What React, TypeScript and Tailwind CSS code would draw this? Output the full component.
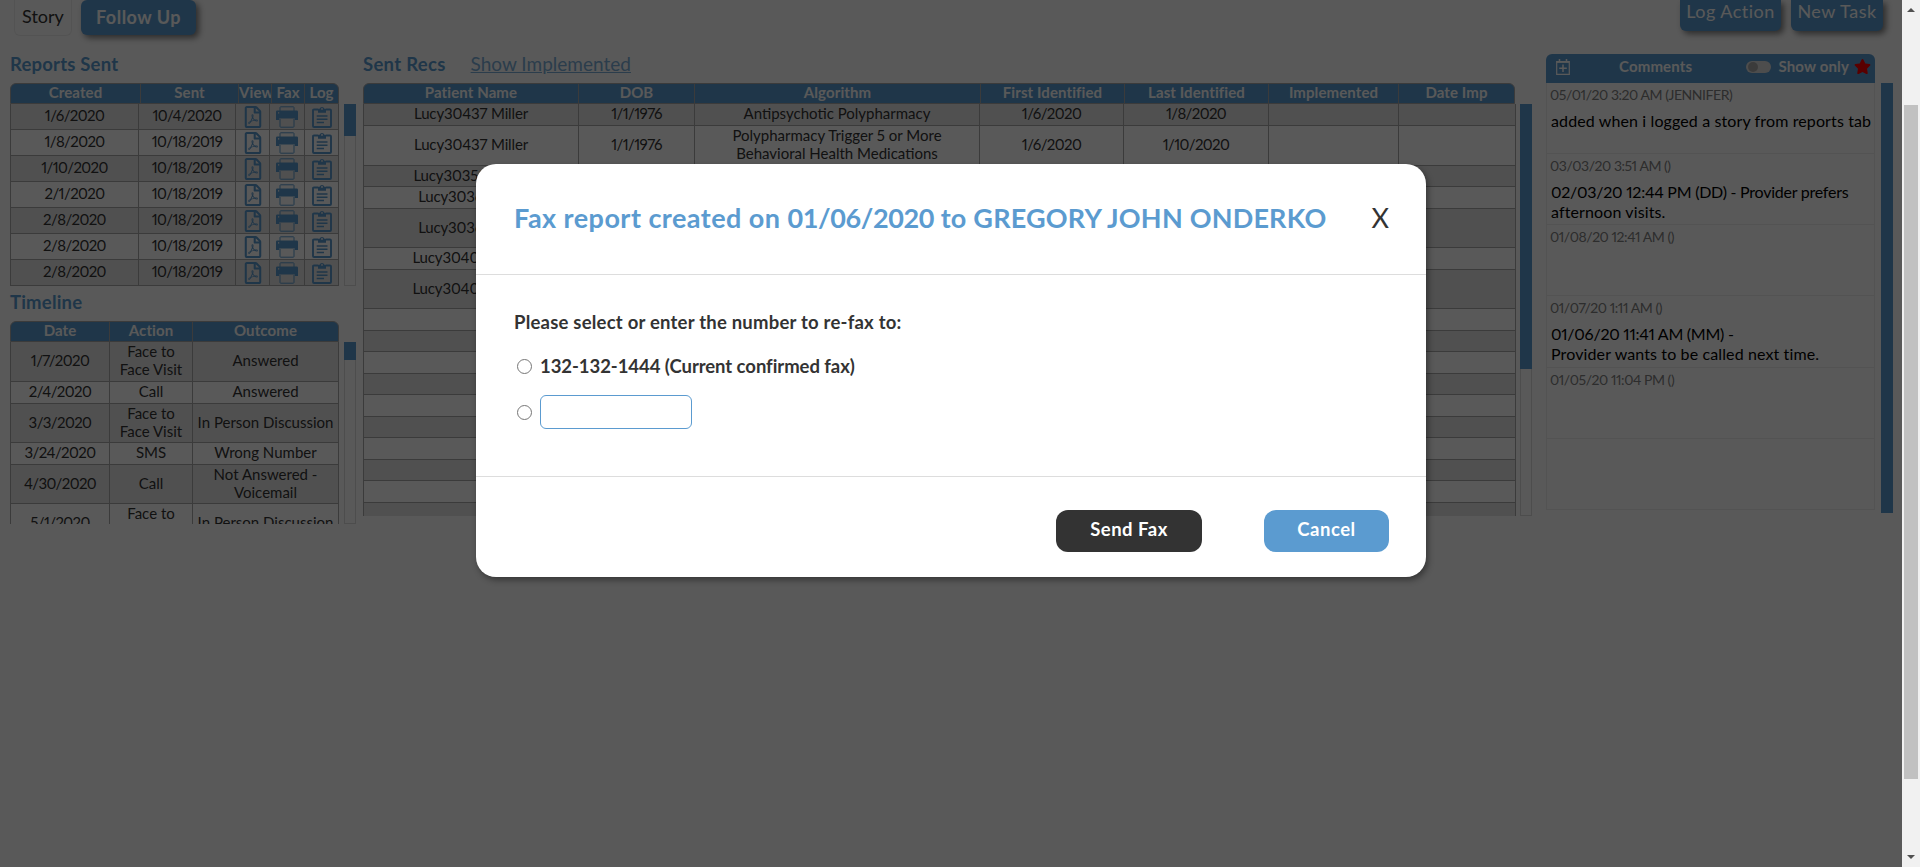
import type { ReactNode } from "react";
import { FaRegFilePdf, FaStar } from "react-icons/fa";

const FONT = "font-['Lato','Noto_Sans',sans-serif]";

function PrinterIcon() {
  return (
    <svg width="22" height="22" viewBox="0 0 22 22" fill="none">
      <path d="M4 5.5V1.5Q4 .8 4.700 .8H17.300Q18 .8 18 1.500V5.500" stroke="#5b9bd0" strokeWidth="1" />
      <path fill="#5b9bd0" fillRule="evenodd" d="M1.200 4.500H20.800Q22 4.500 22 5.700V14H18.800V12.500H3.200V14H0V5.700Q0 4.500 1.200 4.500ZM2 6.300V7.500H3.200V6.300Z" />
      <path d="M4 13V20.500Q4 21.200 4.700 21.200H17.300Q18 21.200 18 20.500V13" stroke="#5b9bd0" strokeWidth="1" />
    </svg>
  );
}

function ClipboardIcon() {
  return (
    <svg width="20" height="22" viewBox="0 0 20 22" fill="none" stroke="#5b9bd0">
      <path d="M6 3.500H2Q1 3.500 1 4.500V20Q1 21 2 21H18Q19 21 19 20V4.500Q19 3.500 18 3.500H14" strokeWidth="1.900" />
      <path fill="#5b9bd0" stroke="none" fillRule="evenodd" d="M6 2.800H7.600A2.500 2.500 0 0 1 12.400 2.800H14V6.800H6ZM10 2A.9 .9 0 1 0 10 3.800A.9 .9 0 1 0 10 2Z" />
      <path d="M4.700 9.900H15.500M4.700 13.200H15.500M4.700 16.500H12" strokeWidth="1.500" />
    </svg>
  );
}

function CalendarPlusIcon() {
  return (
    <svg width="14" height="16" viewBox="0 0 14 16" fill="none" stroke="#fff">
      <path d="M.700 2.500H13.300V15.300H.700Z" strokeWidth="1.200" />
      <path d="M.700 3H13.300" strokeWidth="1.800" />
      <path d="M3.500 0V3M10.500 0V3" strokeWidth="1.500" />
      <path d="M7 5.500V13M3.200 9.200H10.800" strokeWidth="1.500" />
    </svg>
  );
}

function Scroll({ track, thumb }: { track: string; thumb: string }) {
  return (
    <div className={`w-3 shrink-0 border border-[#dcdcdc] ${track}`}>
      <div className={`-mx-px -mt-px bg-[#5b9bd0] ${thumb}`} />
    </div>
  );
}

function Head({ cols, labels, className = "" }: { cols: string; labels: string[]; className?: string }) {
  return (
    <div className={`grid h-[21px] overflow-hidden rounded-t-[6px] border border-[#aaa] bg-[#5b9bd0] text-[15px] leading-[17px] font-bold tracking-[0.1px] text-white ${cols} ${className}`}>
      {labels.map((l, i) => (
        <div key={l} className={`overflow-hidden text-center whitespace-nowrap ${i ? "border-l border-[#aaa]" : ""}`}>{l}</div>
      ))}
    </div>
  );
}

function Cell({ children }: { children: ReactNode }) {
  if (typeof children !== "string") return <>{children}</>;
  const isDate = /^\d+\/\d+\/\d+$/.test(children);
  const hasDigits = /^Lucy/.test(children);
  return (
    <span className={`pb-[3px] proportional-nums ${isDate ? "tracking-[-0.6px]" : hasDigits ? "tracking-[-0.15px]" : ""}`}>
      {children}
    </span>
  );
}

function Row({ cols, cells, i, h }: { cols: string; cells: ReactNode[]; i: number; h: string }) {
  return (
    <div className={`grid shrink-0 border-b border-[#aaa] ${h} ${cols} ${i % 2 ? "" : "bg-[#e6e6e6]"}`}>
      {cells.map((c, j) => (
        <div key={j} className="flex items-center justify-center border-l border-[#aaa] text-center whitespace-pre-line last:border-r">
          <Cell>{c}</Cell>
        </div>
      ))}
    </div>
  );
}

const reports = [
  ["1/6/2020", "10/4/2020"],
  ["1/8/2020", "10/18/2019"],
  ["1/10/2020", "10/18/2019"],
  ["2/1/2020", "10/18/2019"],
  ["2/8/2020", "10/18/2019"],
  ["2/8/2020", "10/18/2019"],
  ["2/8/2020", "10/18/2019"],
];

const timeline: [string, string, string, string][] = [
  ["1/7/2020", "Face to\nFace Visit", "Answered", "h-[40px]"],
  ["2/4/2020", "Call", "Answered", "h-[22px]"],
  ["3/3/2020", "Face to\nFace Visit", "In Person Discussion", "h-[39px]"],
  ["3/24/2020", "SMS", "Wrong Number", "h-[22px]"],
  ["4/30/2020", "Call", "Not Answered -\nVoicemail", "h-[39px]"],
  ["5/1/2020", "Face to\nFace Visit", "In Person Discussion", "h-[39px]"],
];

const poly = "Polypharmacy Trigger 5 or More\nBehavioral Health Medications";
const recs: [string, string, string, string, string, string][] = [
  ["Lucy30437 Miller", "1/1/1976", "Antipsychotic Polypharmacy", "1/6/2020", "1/8/2020", "h-[22px]"],
  ["Lucy30437 Miller", "1/1/1976", poly, "1/6/2020", "1/10/2020", "h-[40px]"],
  ["Lucy30350 Miller", "", "", "", "", "h-[21px]"],
  ["Lucy3036 Miller", "", "", "", "", "h-[22px]"],
  ["Lucy3036 Miller", "", "", "", "", "h-[39px]"],
  ["Lucy30400 Miller", "", "", "", "", "h-[22px]"],
  ["Lucy30400 Miller", "", "", "", "", "h-[39px]"],
  ["", "", "", "", "", "h-[22px]"],
  ["", "", "", "", "", "h-[21px]"],
  ["", "", "", "", "", "h-[22px]"],
  ["", "", "", "", "", "h-[21px]"],
  ["", "", "", "", "", "h-[22px]"],
  ["", "", "", "", "", "h-[21px]"],
  ["", "", "", "", "", "h-[22px]"],
  ["", "", "", "", "", "h-[21px]"],
  ["", "", "", "", "", "h-[22px]"],
  ["", "", "", "", "", "h-[22px]"],
];

const comments: [string, string[], string][] = [
  ["05/01/20 3:20 AM (JENNIFER)", ["added when i logged a story from reports tab"], "h-[71px]"],
  ["03/03/20 3:51 AM ()", ["02/03/20 12:44 PM (DD) - Provider prefers", "afternoon visits."], "h-[71px]"],
  ["01/08/20 12:41 AM ()", [], "h-[71px]"],
  ["01/07/20 1:11 AM ()", ["01/06/20 11:41 AM (MM) -", "Provider wants to be called next time."], "h-[72px]"],
  ["01/05/20 11:04 PM ()", [], "h-[71px]"],
];

const shadow = "shadow-[3px_3px_6px_rgba(0,0,0,0.5)]";

function Left() {
  return (
    <section className="w-[346px] shrink-0">
      <h2 className="h-[31px] pt-px text-[18.5px] leading-[22px] font-bold tracking-[0.2px] text-[#5b9bd0]">Reports Sent</h2>
      <Head className="w-[329px]" cols="grid-cols-[129px_98px_33px_33px_1fr]" labels={["Created", "Sent", "View", "Fax", "Log"]} />
      <div className="flex justify-between">
        <div className="flex h-[182px] w-[329px] flex-col overflow-hidden text-[15px] leading-[18px] text-[#333]">
          {reports.map((r, i) => (
            <Row
              key={i}
              i={i}
              h="h-[26px]"
              cols="grid-cols-[128px_97px_34px_35px_1fr]"
              cells={[r[0], r[1], <FaRegFilePdf size={22} color="#5b9bd0" />, <PrinterIcon />, <ClipboardIcon />]}
            />
          ))}
        </div>
        <Scroll track="h-[182px]" thumb="h-[32px]" />
      </div>
      <h2 className="h-[35px] pt-[5px] text-[18.5px] leading-[22px] font-bold tracking-[0.2px] text-[#5b9bd0]">Timeline</h2>
      <Head className="w-[329px]" cols="grid-cols-[98px_83px_1fr]" labels={["Date", "Action", "Outcome"]} />
      <div className="flex justify-between">
        <div className="flex h-[182px] w-[329px] flex-col overflow-hidden text-[15px] leading-[18px] text-[#333]">
          {timeline.map((r, i) => (
            <Row key={i} i={i} h={r[3]} cols="grid-cols-[99px_83px_1fr]" cells={[r[0], r[1], r[2]]} />
          ))}
        </div>
        <Scroll track="h-[182px]" thumb="h-[18px]" />
      </div>
    </section>
  );
}

function Middle() {
  return (
    <section className="w-[1169px] shrink-0">
      <h2 className="flex h-[31px] gap-[25px] pt-px text-[18.5px] leading-[22px] font-bold tracking-[0.3px] text-[#5b9bd0]">
        Sent Recs
        <span className="text-[19px] font-normal tracking-normal underline opacity-80">Show Implemented</span>
      </h2>
      <Head
        className="w-[1152px]"
        cols="grid-cols-[214px_116px_286px_144px_144px_130px_1fr]"
        labels={["Patient Name", "DOB", "Algorithm", "First Identified", "Last Identified", "Implemented", "Date Imp"]}
      />
      <div className="flex justify-between">
        <div className="flex h-[412px] w-[1153px] flex-col overflow-hidden text-[15px] leading-[18px] text-[#333]">
          {recs.map((r, i) => (
            <Row key={i} i={i} h={r[5]} cols="grid-cols-[215px_116px_285px_144px_145px_130px_1fr]" cells={[r[0], r[1], r[2], r[3], r[4], "", ""]} />
          ))}
        </div>
        <Scroll track="h-[412px]" thumb="h-[265px]" />
      </div>
    </section>
  );
}

function Comments() {
  return (
    <section className="flex w-[347px] shrink-0 pt-[2px]">
      <div className="w-[329px]">
        <div className="flex h-[29px] items-center rounded-t-[6px] bg-[#5b9bd0] pr-[4px] pb-[4px] pl-[10px] text-[15px] font-bold tracking-[0.15px] text-white">
          <CalendarPlusIcon />
          <span className="ml-[49px] pb-px">Comments</span>
          <span className="mt-px mr-[7px] ml-auto flex h-3 w-[25px] items-center rounded-full bg-[#ddd] pl-[2px]">
            <span className="size-[10px] rounded-full bg-[#aaa]" />
          </span>
          <span className="mr-[5px] pb-px">Show only</span>
          <FaStar size={17} color="#f00" />
        </div>
        <div className="h-[427px] border border-t-0 border-[#eee]">
          {comments.map(([d, lines, h]) => (
            <div key={d} className={`border-b border-[#eee] pl-[3px] proportional-nums ${h}`}>
              <div className="pt-[3px] text-[14px] leading-[18px] tracking-[-0.45px] text-[#808080]">{d}</div>
              <div className="pt-[7px] pl-px text-[16px] leading-[20px] whitespace-pre text-black">
                {lines.map((l) => (
                  <div key={l} className={/^\d/.test(l) ? "tracking-[-0.25px]" : "tracking-[0.12px]"}>{l}</div>
                ))}
              </div>
            </div>
          ))}
        </div>
      </div>
      <div className="mt-[29px] ml-[6px] h-[430px] w-3 bg-[#5b9bd0]" />
    </section>
  );
}

function Modal() {
  return (
    <div className="absolute inset-y-0 left-0 flex w-[1902px] items-start justify-center bg-black/65 pt-[164px]">
      <div className="h-[412.5px] w-[950px] rounded-[20px] bg-white text-[#333] shadow-[2px_3px_6px_rgba(0,0,0,0.4)]">
        <div className="flex h-[111px] items-start justify-between border-b border-[#ddd] pr-[37px] pl-[38px] text-[27px] leading-[32px]">
          <h1 className="mt-[38px] font-bold whitespace-nowrap text-[#5b9bd0]">
            <span className="tracking-[0.45px]">Fax report created on </span>
            <span className="tracking-[-0.4px]">01/06/2020</span>
            <span className="tracking-[0.2px]"> to GREGORY JOHN ONDERKO</span>
          </h1>
          <button className="mt-[38px]">X</button>
        </div>
        <div className="h-[202px] border-b border-[#ddd] pl-[38px] text-[18.5px] leading-[24px] font-bold">
          <p className="pt-[35px] tracking-[0.22px]">Please select or enter the number to re-fax to:</p>
          <label className="mt-[20px] flex items-center tracking-[-0.06px]">
            <span className="mr-[8px] ml-[3px] size-[15px] rounded-full border border-[#767676]" />
            132-132-1444 (Current confirmed fax)
          </label>
          <label className="mt-[17px] flex items-center">
            <span className="mr-[8px] ml-[3px] size-[15px] rounded-full border border-[#767676]" />
            <input className="h-[34px] w-[152px] rounded-[6px] border border-[#5b9bd0]" />
          </label>
        </div>
        <div className="flex justify-end gap-[62px] pt-[33px] pr-[37px] text-[18.5px] font-bold tracking-[0.5px] text-white">
          <button className="h-[42px] w-[146px] rounded-[12px] bg-[#333] pb-[3px]">Send Fax</button>
          <button className="h-[42px] w-[125px] rounded-[12px] bg-[#5b9bd0] pb-[3px]">Cancel</button>
        </div>
      </div>
    </div>
  );
}

export default function App() {
  return (
    <div className={`relative flex h-[867px] w-[1920px] overflow-hidden bg-white ${FONT}`}>
      <main className="w-[1902px] shrink-0">
        <div className="flex h-[52px] items-start pl-[14px] text-[18px]">
          <div className="flex h-[36px] w-[58px] items-center justify-center rounded-b-[6px] border border-t-0 border-[#eee] pb-[2px] text-[#333]">Story</div>
          <div className={`ml-[9px] flex h-[35px] w-[115px] items-center justify-center rounded-[6px] bg-[#5b9bd0] pb-px font-bold tracking-[0.5px] text-white ${shadow}`}>Follow Up</div>
          <div className={`ml-auto flex h-[31px] w-[101px] justify-center rounded-b-[6px] bg-[#5b9bd0] leading-[22px] tracking-[0.5px] text-white ${shadow}`}>Log Action</div>
          <div className={`mr-[19px] ml-[10px] flex h-[31px] w-[92px] justify-center rounded-b-[6px] bg-[#5b9bd0] leading-[22px] tracking-[0.5px] text-white ${shadow}`}>New Task</div>
        </div>
        <div className="flex pl-[10px]">
          <Left />
          <div className="w-[7px] shrink-0" />
          <Middle />
          <div className="w-[14px] shrink-0" />
          <Comments />
        </div>
      </main>
      <div className="flex w-[18px] flex-col items-center bg-[#f1f1f1]">
        <svg width="8" height="4" viewBox="0 0 8 4" className="mt-2"><path d="M4 0L8 4H0Z" fill="#505050" /></svg>
        <div className="mt-[93px] h-[674px] w-[14px] bg-[#c1c1c1]" />
        <svg width="8" height="4" viewBox="0 0 8 4" className="mt-auto mb-2"><path d="M4 4L8 0H0Z" fill="#505050" /></svg>
      </div>
      <Modal />
    </div>
  );
}
